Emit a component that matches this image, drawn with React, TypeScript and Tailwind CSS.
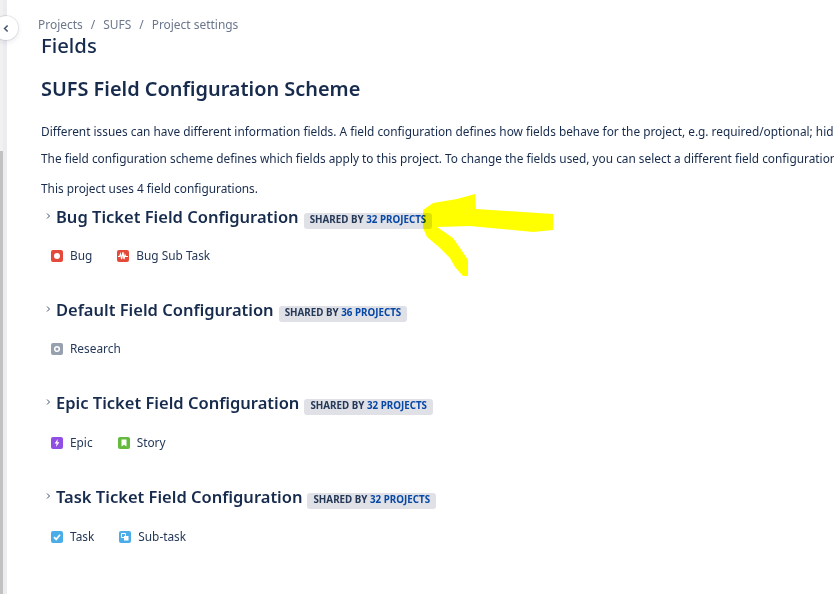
import type { ReactNode } from "react";

const IssueIcon = ({ bg, children }: { bg: string; children: ReactNode }) => (
  <span className={`flex h-[12px] w-[12px] items-center justify-center rounded-[2px] ${bg}`}>
    <svg viewBox="0 0 12 12" className="h-[12px] w-[12px]">
      {children}
    </svg>
  </span>
);

const icons: Record<string, ReactNode> = {
  Bug: (
    <IssueIcon bg="bg-[#e5493a]">
      <circle cx="6" cy="6" r="3" fill="#fff" />
    </IssueIcon>
  ),
  "Bug Sub Task": (
    <IssueIcon bg="bg-[#e5493a]">
      <path d="M1 6.5h1.5l1-2.5 1.2 5 1.2-7 1.1 7 1-4 .7 1.5H11" fill="none" stroke="#fff" strokeWidth="1.2" />
    </IssueIcon>
  ),
  Research: (
    <IssueIcon bg="bg-[#97a0af]">
      <circle cx="6" cy="6" r="2.3" fill="none" stroke="#fff" strokeWidth="1.5" />
    </IssueIcon>
  ),
  Epic: (
    <IssueIcon bg="bg-[#904ee2]">
      <path d="M6.8 2 3.6 6.6h2L5 10l3.4-4.7h-2z" fill="#fff" />
    </IssueIcon>
  ),
  Story: (
    <IssueIcon bg="bg-[#63ba3c]">
      <path d="M3.5 2.5h5v7L6 7.8 3.5 9.5z" fill="#fff" />
    </IssueIcon>
  ),
  Task: (
    <IssueIcon bg="bg-[#4bade8]">
      <path d="m3 6.2 2.2 2.2L9 3.8" fill="none" stroke="#fff" strokeWidth="1.7" />
    </IssueIcon>
  ),
  "Sub-task": (
    <IssueIcon bg="bg-[#4bade8]">
      <path d="M2.5 2.5h4v4h-4z" fill="none" stroke="#fff" strokeWidth="1" />
      <path d="M5 5h4.5v4.5H5z" fill="#fff" />
    </IssueIcon>
  ),
};

const configs = [
  { name: "Bug Ticket Field Configuration", count: 32, types: ["Bug", "Bug Sub Task"], height: "h-[93px]", rowGap: "mt-[19px]" },
  { name: "Default Field Configuration", count: 36, types: ["Research"], height: "h-[93px]", rowGap: "mt-[19px]" },
  { name: "Epic Ticket Field Configuration", count: 32, types: ["Epic", "Story"], height: "h-[94px]", rowGap: "mt-[20px]" },
  { name: "Task Ticket Field Configuration", count: 32, types: ["Task", "Sub-task"], height: "h-[94px]", rowGap: "mt-[20px]" },
];

function ConfigSection({ name, count, types, height, rowGap }: (typeof configs)[number]) {
  return (
    <section className={height}>
      <div className="flex h-[24px] items-center">
        <svg viewBox="0 0 6 8" className="mb-[3px] ml-[5px] mr-[5px] h-[8px] w-[5px]">
          <path d="M1.2 1 4.2 4 1.2 7" fill="none" stroke="#42526e" strokeWidth="1.2" />
        </svg>
        <h3 className="text-[16.5px] leading-[24px] font-semibold text-[#172b4d]">{name}</h3>
        <span className="mt-[7px] ml-[5px] flex h-[16px] items-center rounded-[3px] bg-[#dfe1e6] px-[6px] text-[9.8px] font-bold whitespace-nowrap text-[#253858]">
          SHARED BY&nbsp;<span className="text-[#0747a6]">{count} PROJECTS</span>
        </span>
      </div>
      <div className={`${rowGap} ml-[10px] flex h-[16px] items-center gap-[25px]`}>
        {types.map(type => (
          <div key={type} className="flex items-center gap-[7px] text-[11.85px] text-[#253858]">
            {icons[type]}
            <span>{type}</span>
          </div>
        ))}
      </div>
    </section>
  );
}

export default function App() {
  return (
    <div className="relative flex h-[594px] w-[834px] overflow-hidden bg-white font-['Noto_Sans',sans-serif] text-[#172b4d]">
      <div className="flex w-[7px] shrink-0">
        <div className="flex w-[3px] flex-col bg-[#f1f1f1]">
          <div className="mt-[151px] h-[443px] bg-[#c1c1c1]" />
        </div>
        <div className="w-[4px] bg-[#ebecf0]" />
      </div>

      <button className="absolute top-[16px] left-[-6px] flex h-[24px] w-[24px] items-center justify-center rounded-full bg-white shadow-[0_0_0_1px_rgba(9,30,66,0.08),0_2px_4px_1px_rgba(9,30,66,0.08)]">
        <svg viewBox="0 0 6 8" className="h-[9px] w-[6px]">
          <path d="M4.6 1 1.6 4l3 3" fill="none" stroke="#42526e" strokeWidth="1.5" />
        </svg>
      </button>

      <main className="min-w-0 flex-1 pl-[31px]">
        <nav className="mt-[16px] flex h-[18px] items-center gap-[8px] text-[11.95px] whitespace-nowrap text-[#6b778c]">
          <span>Projects</span>
          <span>/</span>
          <span>SUFS</span>
          <span>/</span>
          <span>Project settings</span>
        </nav>
        <div className="pl-[3px] whitespace-nowrap">
          <h1 className="text-[20.3px] leading-[22px] font-medium">Fields</h1>
          <h2 className="mt-[19px] text-[19.9px] leading-[28px] font-semibold">SUFS Field Configuration Scheme</h2>
          <p className="mt-[18px] text-[11.85px] leading-[20px]">
            Different issues can have different information fields. A field configuration defines how fields behave for the project, e.g. required/optional; hidden/visible.
          </p>
          <p className="mt-[7px] text-[11.85px] leading-[20px]">
            The field configuration scheme defines which fields apply to this project. To change the fields used, you can select a different field configuration scheme.
          </p>
          <p className="mt-[10px] text-[11.85px] leading-[20px]">This project uses 4 field configurations.</p>
        </div>
        <div className="mt-[7px] pl-[3px]">
          {configs.map(config => (
            <ConfigSection key={config.name} {...config} />
          ))}
        </div>
      </main>

      {/* yellow marker scribble drawn over the screenshot */}
      <svg className="pointer-events-none absolute top-0 left-0 mix-blend-multiply" width="834" height="594">
        <path
          d="M423 210 433 203 457 199 475 194 476 209 553 214 553 230 533 232 470 226 437 227 453 238 460 248 468 260 468 276 463 276 455 267 450 258 440 248 427 237 423 228Z"
          fill="#ffff00"
        />
      </svg>
    </div>
  );
}
